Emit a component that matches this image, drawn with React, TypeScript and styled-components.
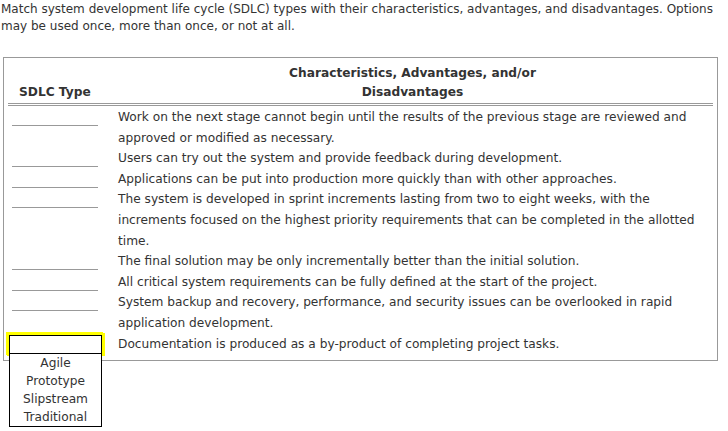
import React from "react";
import styled, { createGlobalStyle } from "styled-components";

const Global = createGlobalStyle`
  html, body { margin: 0; padding: 0; background: #fff; }
  body {
    font-family: "DejaVu Sans", Verdana, sans-serif;
    font-size: 12.2px;
    color: #333;
  }
`;

const Page = styled.div`
  padding: 0 0 0 1px;
  width: 728px;
  min-height: 431px;
  box-sizing: border-box;
`;

const Prompt = styled.p`
  margin: 0;
  font-size: 12px;
  line-height: 17px;
  padding-top: 1px;
`;

const Panel = styled.div`
  margin: 22px 10px 0 2px;
  border: 1px solid #999;
  padding: 4px 4px 6px 4px;
`;

const Grid = styled.div`
  display: grid;
  grid-template-columns: 104px 1fr;
`;

const HeadCell = styled.div<{ $center?: boolean }>`
  font-weight: bold;
  line-height: 19px;
  padding: 2px 6px 1px ${(p) => (p.$center ? "6px" : "11px")};
  margin-bottom: 1px;
  text-align: ${(p) => (p.$center ? "center" : "left")};
  display: flex;
  align-items: flex-end;
  justify-content: ${(p) => (p.$center ? "center" : "flex-start")};
  border-bottom: 3px double #999;
`;

const SlotCell = styled.div`
  padding: 0 0 0 4px;
  line-height: 20.6px;
  position: relative;
`;

const Blank = styled.div`
  width: 86px;
  height: 18px;
  border-bottom: 1px solid #999;
`;

const ActiveSlot = styled.div`
  margin: 1px 0 0 -3px;
  width: 91px;
  height: 17px;
  border: 1px solid #000;
  background: #fff;
  box-shadow: 0 0 0 2px #ff0, -1px -1px 0 2px #ff0, 1px 0 0 2px #ff0;
`;

const Menu = styled.ul`
  position: absolute;
  left: 1px;
  top: 19px;
  width: 91px;
  margin: 0;
  padding: 0;
  list-style: none;
  border: 1px solid #000;
  background: #fff;
  z-index: 2;
`;

const MenuItem = styled.li`
  text-align: center;
  line-height: 18px;
`;

const TextCell = styled.div`
  line-height: 20.6px;
  padding-left: 6px;
`;

const Body = styled.div`
  display: contents;
`;

const rows = [
  "Work on the next stage cannot begin until the results of the previous stage are reviewed and approved or modified as necessary.",
  "Users can try out the system and provide feedback during development.",
  "Applications can be put into production more quickly than with other approaches.",
  "The system is developed in sprint increments lasting from two to eight weeks, with the increments focused on the highest priority requirements that can be completed in the allotted time.",
  "The final solution may be only incrementally better than the initial solution.",
  "All critical system requirements can be fully defined at the start of the project.",
  "System backup and recovery, performance, and security issues can be overlooked in rapid application development.",
  "Documentation is produced as a by-product of completing project tasks.",
];

const options = ["Agile", "Prototype", "Slipstream", "Traditional"];

export default function App() {
  return (
    <Page>
      <Global />
      <Prompt>
        Match system development life cycle (SDLC) types with their characteristics, advantages, and disadvantages. Options
        may be used once, more than once, or not at all.
      </Prompt>
      <Panel>
        <Grid>
          <HeadCell>SDLC Type</HeadCell>
          <HeadCell $center>
            Characteristics, Advantages, and/or
            <br />
            Disadvantages
          </HeadCell>
          <Body>
            {rows.map((text, i) => {
              const last = i === rows.length - 1;
              return (
                <React.Fragment key={i}>
                  <SlotCell>
                    {last ? (
                      <>
                        <ActiveSlot />
                        <Menu>
                          {options.map((o) => (
                            <MenuItem key={o}>{o}</MenuItem>
                          ))}
                        </Menu>
                      </>
                    ) : (
                      <Blank />
                    )}
                  </SlotCell>
                  <TextCell>{text}</TextCell>
                </React.Fragment>
              );
            })}
          </Body>
        </Grid>
      </Panel>
    </Page>
  );
}
